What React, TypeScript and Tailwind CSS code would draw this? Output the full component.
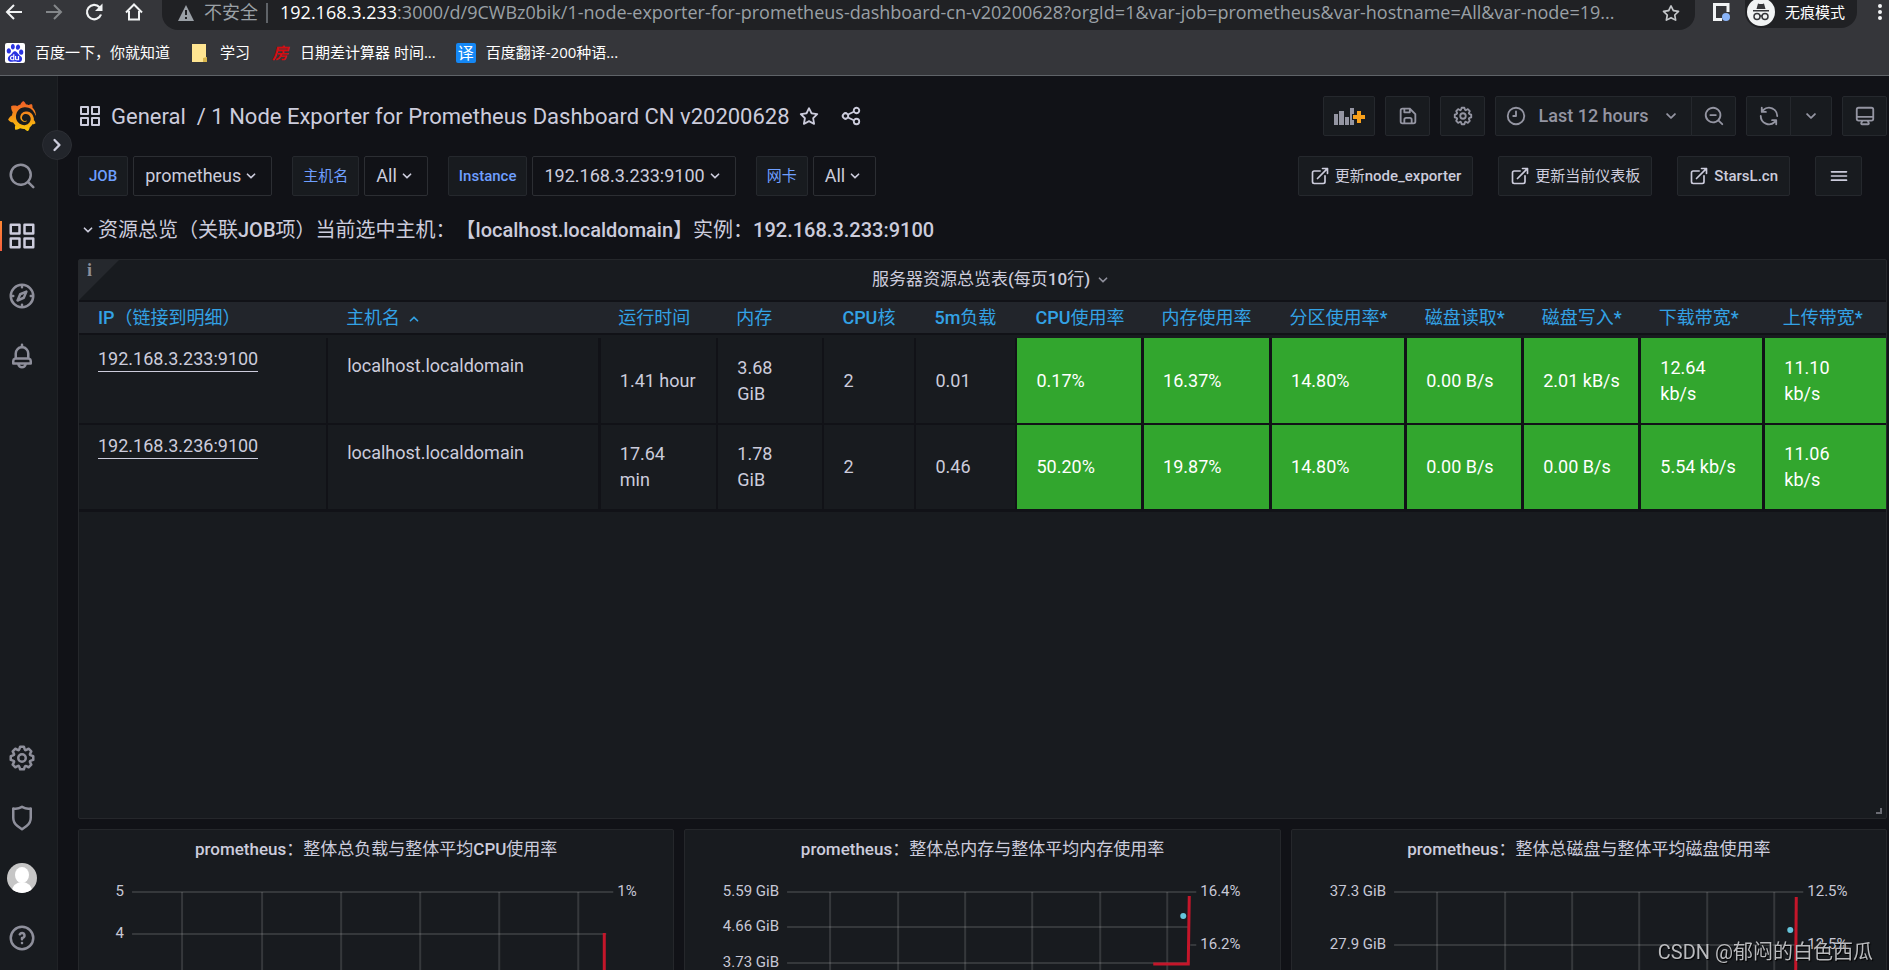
import type { ReactNode } from "react";
import { SiBaidu, SiGrafana } from "react-icons/si";

const icons = {
  apps: "M10,13H3a1,1,0,0,0-1,1v7a1,1,0,0,0,1,1h7a1,1,0,0,0,1-1V14A1,1,0,0,0,10,13ZM9,20H4V15H9ZM21,2H14a1,1,0,0,0-1,1v7a1,1,0,0,0,1,1h7a1,1,0,0,0,1-1V3A1,1,0,0,0,21,2ZM20,9H15V4h5Zm1,4H14a1,1,0,0,0-1,1v7a1,1,0,0,0,1,1h7a1,1,0,0,0,1-1V14A1,1,0,0,0,21,13Zm-1,7H15V15h5ZM10,2H3A1,1,0,0,0,2,3v7a1,1,0,0,0,1,1h7a1,1,0,0,0,1-1V3A1,1,0,0,0,10,2ZM9,9H4V4H9Z",
  search: "M21.71,20.29,18,16.61A9,9,0,1,0,16.61,18l3.68,3.68a1,1,0,0,0,1.42,0A1,1,0,0,0,21.71,20.29ZM11,18a7,7,0,1,1,7-7A7,7,0,0,1,11,18Z",
  searchMinus:
    "M21.71,20.29,18,16.61A9,9,0,1,0,16.61,18l3.68,3.68a1,1,0,0,0,1.42,0A1,1,0,0,0,21.71,20.29ZM11,18a7,7,0,1,1,7-7A7,7,0,0,1,11,18ZM14,10H8a1,1,0,0,0,0,2h6a1,1,0,0,0,0-2Z",
  angleDown:
    "M17,9.17a1,1,0,0,0-1.41,0L12,12.71,8.46,9.17a1,1,0,0,0-1.41,0,1,1,0,0,0,0,1.42l4.24,4.24a1,1,0,0,0,1.42,0L17,10.59A1,1,0,0,0,17,9.17Z",
  compass:
    "M12,2A10,10,0,1,0,22,12,10,10,0,0,0,12,2Zm1,17.93V19a1,1,0,0,0-2,0v.93A8,8,0,0,1,4.07,13H5a1,1,0,0,0,0-2H4.07A8,8,0,0,1,11,4.07V5a1,1,0,0,0,2,0V4.07A8,8,0,0,1,19.93,11H19a1,1,0,0,0,0,2h.93A8,8,0,0,1,13,19.93ZM15.14,7.55l-5,2.12a1,1,0,0,0-.52.52l-2.12,5a1,1,0,0,0,.21,1.1,1,1,0,0,0,.7.3.93.93,0,0,0,.4-.09l5-2.12a1,1,0,0,0,.52-.52l2.12-5a1,1,0,0,0-1.31-1.31Zm-2.49,5.1-2.28,1,1-2.28,2.28-1Z",
  bell: "M18,13.18V10a6,6,0,0,0-5-5.91V3a1,1,0,0,0-2,0V4.09A6,6,0,0,0,6,10v3.18A3,3,0,0,0,4,16v2a1,1,0,0,0,1,1H8.14a4,4,0,0,0,7.72,0H19a1,1,0,0,0,1-1V16A3,3,0,0,0,18,13.18ZM8,10a4,4,0,0,1,8,0v3H8Zm4,10a2,2,0,0,1-1.72-1h3.44A2,2,0,0,1,12,20Zm6-3H6V16a1,1,0,0,1,1-1H17a1,1,0,0,1,1,1Z",
  cog: "M21.32,9.55l-1.89-.63.89-1.78A1,1,0,0,0,20.13,6L18,3.87a1,1,0,0,0-1.15-.19l-1.78.89-.63-1.89A1,1,0,0,0,13.5,2h-3a1,1,0,0,0-.95.68L8.92,4.57,7.14,3.68A1,1,0,0,0,6,3.87L3.87,6a1,1,0,0,0-.19,1.15l.89,1.78-1.89.63A1,1,0,0,0,2,10.5v3a1,1,0,0,0,.68.95l1.89.63-.89,1.78A1,1,0,0,0,3.87,18L6,20.13a1,1,0,0,0,1.15.19l1.78-.89.63,1.89a1,1,0,0,0,.95.68h3a1,1,0,0,0,.95-.68l.63-1.89,1.78.89A1,1,0,0,0,18,20.13L20.13,18a1,1,0,0,0,.19-1.15l-.89-1.78,1.89-.63A1,1,0,0,0,22,13.5v-3A1,1,0,0,0,21.32,9.55ZM20,12.78l-1.2.4A2,2,0,0,0,17.64,16l.57,1.14-1.1,1.1L16,17.64a2,2,0,0,0-2.79,1.16l-.4,1.2H11.22l-.4-1.2A2,2,0,0,0,8,17.64l-1.14.57-1.1-1.1L6.36,16A2,2,0,0,0,5.2,13.18L4,12.78V11.22l1.2-.4A2,2,0,0,0,6.36,8L5.79,6.89l1.1-1.1L8,6.36A2,2,0,0,0,10.82,5.2l.4-1.2h1.56l.4,1.2A2,2,0,0,0,16,6.36l1.14-.57,1.1,1.1L17.64,8a2,2,0,0,0,1.16,2.79l1.2.4ZM12,8a4,4,0,1,0,4,4A4,4,0,0,0,12,8Zm0,6a2,2,0,1,1,2-2A2,2,0,0,1,12,14Z",
  shield:
    "M19.63,3.65a1,1,0,0,0-.84-.2,8,8,0,0,1-6.22-1.27,1,1,0,0,0-1.14,0A8,8,0,0,1,5.21,3.45a1,1,0,0,0-.84.2A1,1,0,0,0,4,4.43v7.45a9,9,0,0,0,3.77,7.33l3.65,2.6a1,1,0,0,0,1.16,0l3.65-2.6A9,9,0,0,0,20,11.88V4.43A1,1,0,0,0,19.63,3.65ZM18,11.88a7,7,0,0,1-2.93,5.7L12,19.77,8.93,17.58A7,7,0,0,1,6,11.88V5.58a10,10,0,0,0,6-1.39,10,10,0,0,0,6,1.39Z",
  question:
    "M11.29,15.29a1.58,1.58,0,0,0-.12.15.76.76,0,0,0-.09.18.64.64,0,0,0-.06.18,1.36,1.36,0,0,0,0,.2.84.84,0,0,0,.08.38.9.9,0,0,0,.54.54.94.94,0,0,0,.76,0,.9.9,0,0,0,.54-.54A1,1,0,0,0,13,16a1,1,0,0,0-.29-.71A1,1,0,0,0,11.29,15.29ZM12,2A10,10,0,1,0,22,12,10,10,0,0,0,12,2Zm0,18a8,8,0,1,1,8-8A8,8,0,0,1,12,20ZM12,7A3,3,0,0,0,9.4,8.5a1,1,0,1,0,1.73,1A1,1,0,0,1,12,9a1,1,0,0,1,0,2,1,1,0,0,0-1,1v1a1,1,0,0,0,2,0v-.18A3,3,0,0,0,12,7Z",
  save: "M20.71,9.29l-6-6a1,1,0,0,0-.32-.21A1.09,1.09,0,0,0,14,3H6A3,3,0,0,0,3,6V18a3,3,0,0,0,3,3H18a3,3,0,0,0,3-3V10A1,1,0,0,0,20.71,9.29ZM9,5h4V7H9Zm6,14H9V16a1,1,0,0,1,1-1h4a1,1,0,0,1,1,1Zm4-1a1,1,0,0,1-1,1H17V16a3,3,0,0,0-3-3H10a3,3,0,0,0-3,3v3H6a1,1,0,0,1-1-1V6A1,1,0,0,1,6,5H7V8A1,1,0,0,0,8,9h6a1,1,0,0,0,1-1V6.41l4,4Z",
  clock:
    "M12,2A10,10,0,1,0,22,12,10,10,0,0,0,12,2Zm0,18a8,8,0,1,1,8-8A8,8,0,0,1,12,20ZM12,6a1,1,0,0,0-1,1v4H9a1,1,0,0,0,0,2h3a1,1,0,0,0,1-1V7A1,1,0,0,0,12,6Z",
  sync: "M19.91,15.51H15.38a1,1,0,0,0,0,2h2.4A8,8,0,0,1,4,12a1,1,0,0,0-2,0,10,10,0,0,0,16.88,7.23V21a1,1,0,0,0,2,0V16.5A1,1,0,0,0,19.91,15.51ZM12,2A10,10,0,0,0,5.12,4.77V3a1,1,0,0,0-2,0V7.5a1,1,0,0,0,1,1h4.5a1,1,0,0,0,0-2H6.22A8,8,0,0,1,20,12a1,1,0,0,0,2,0A10,10,0,0,0,12,2Z",
  monitor:
    "M19,2H5A3,3,0,0,0,2,5V15a3,3,0,0,0,3,3H7.64l-.58,1a2,2,0,0,0,0,2,2,2,0,0,0,1.75,1h6.46A2,2,0,0,0,17,21a2,2,0,0,0,0-2l-.59-1H19a3,3,0,0,0,3-3V5A3,3,0,0,0,19,2ZM8.77,20,10,18H14l1.2,2ZM20,15a1,1,0,0,1-1,1H5a1,1,0,0,1-1-1V14H20Zm0-3H4V5A1,1,0,0,1,5,4H19a1,1,0,0,1,1,1Z",
  external:
    "M18,10.82a1,1,0,0,0-1,1V19a1,1,0,0,1-1,1H5a1,1,0,0,1-1-1V8A1,1,0,0,1,5,7h7.18a1,1,0,0,0,0-2H5A3,3,0,0,0,2,8V19a3,3,0,0,0,3,3H16a3,3,0,0,0,3-3V11.82A1,1,0,0,0,18,10.82Zm3.92-8.2a1,1,0,0,0-.54-.54A1,1,0,0,0,21,2H15a1,1,0,0,0,0,2h3.59L8.29,14.29a1,1,0,0,0,0,1.42,1,1,0,0,0,1.42,0L20,5.41V9a1,1,0,0,0,2,0V3A1,1,0,0,0,21.92,2.62Z",
  star: "M22,9.67A1,1,0,0,0,21.14,9l-5.69-.83L12.9,3a1,1,0,0,0-1.8,0L8.55,8.16,2.86,9a1,1,0,0,0-.81.68,1,1,0,0,0,.25,1l4.13,4-1,5.68A1,1,0,0,0,6.9,21.44L12,18.77l5.1,2.67a.93.93,0,0,0,.46.12,1,1,0,0,0,.59-.19,1,1,0,0,0,.4-1l-1-5.68,4.13-4A1,1,0,0,0,22,9.67Zm-6.15,4a1,1,0,0,0-.29.88l.72,4.2-3.76-2a1.06,1.06,0,0,0-.94,0l-3.76,2,.72-4.2a1,1,0,0,0-.29-.88l-3-3,4.21-.61a1,1,0,0,0,.76-.55L12,5.7l1.88,3.82a1,1,0,0,0,.76.55l4.21.61Z",
  share:
    "M18,14a4,4,0,0,0-3.08,1.48l-5.1-2.35a3.64,3.64,0,0,0,0-2.26l5.1-2.35A4,4,0,1,0,14,6a4.17,4.17,0,0,0,.07.71L8.79,9.14a4,4,0,1,0,0,5.72l5.28,2.43A4.17,4.17,0,0,0,14,18a4,4,0,1,0,4-4ZM18,4a2,2,0,1,1-2,2A2,2,0,0,1,18,4ZM6,14a2,2,0,1,1,2-2A2,2,0,0,1,6,14Zm12,6a2,2,0,1,1,2-2A2,2,0,0,1,18,20Z",
  bars: "M3,8H21a1,1,0,0,0,0-2H3A1,1,0,0,0,3,8Zm18,8H3a1,1,0,0,0,0,2H21a1,1,0,0,0,0-2Zm0-5H3a1,1,0,0,0,0,2H21a1,1,0,0,0,0-2Z",
};

type IconName = keyof typeof icons;

function Icon({ name, className = "size-5" }: { name: IconName; className?: string }) {
  return (
    <svg viewBox="0 0 24 24" fill="currentColor" aria-hidden="true" className={`shrink-0 ${className}`}>
      <path d={icons[name]} />
    </svg>
  );
}

// Chinese runs stay at regular weight inside medium-weight labels
function Mixed({ text }: { text: string }) {
  return (
    <span>
      {text.split(/([\u3000-\u9fff\uff00-\uffef]+)/).map((part, i) =>
        i % 2 ? (
          <span key={i} className="font-normal">
            {part}
          </span>
        ) : (
          part
        ),
      )}
    </span>
  );
}

const bookmarks = [
  {
    label: "百度一下，你就知道",
    icon: (
      <span className="flex size-5 items-center justify-center rounded-xs bg-white">
        <SiBaidu className="size-[18px] text-[#2932e1]" />
      </span>
    ),
  },
  {
    label: "学习",
    icon: (
      <svg viewBox="0 0 20 20" className="size-5">
        <path d="M2 1h14v13l1 1v4H2z" fill="#ffe591" />
        <path d="M13 19v-4l4-1v5z" fill="#d9b64c" />
      </svg>
    ),
  },
  {
    label: "日期差计算器 时间...",
    icon: (
      <span className="flex size-5 items-center justify-center text-base font-bold text-[#d40d12] italic">房</span>
    ),
  },
  {
    label: "百度翻译-200种语...",
    icon: (
      <span className="flex size-5 items-center justify-center rounded-xs bg-[#1487f4] text-base text-white">译</span>
    ),
  },
];

function BrowserBar() {
  return (
    <div className="h-[76px] shrink-0 border-b border-[#5f6368] bg-[#35363a] font-['Open_Sans','Noto_Sans_CJK_SC',sans-serif]">
      <div className="flex h-[30px] items-start">
        <div className="flex h-6 w-[162px] shrink-0 items-center gap-5 pl-1 text-[#f1f3f4]">
          <button aria-label="Back" className="size-5">
            <svg viewBox="0 0 20 20" fill="none" stroke="currentColor" strokeWidth="2">
              <path d="M18 10H3M10 3l-7 7 7 7" />
            </svg>
          </button>
          <button aria-label="Forward" className="size-5 text-[#84878a]">
            <svg viewBox="0 0 20 20" fill="none" stroke="currentColor" strokeWidth="2">
              <path d="M2 10h15M10 3l7 7-7 7" />
            </svg>
          </button>
          <button aria-label="Reload" className="size-5">
            <svg viewBox="0 0 20 20" fill="none" stroke="currentColor" strokeWidth="2.2">
              <path d="M17 12.500A7.200 7.200 0 1 1 15.500 5.200" />
              <path d="M18.500 1.500v7.500h-7.500z" fill="currentColor" stroke="none" />
            </svg>
          </button>
          <button aria-label="Home" className="size-5">
            <svg viewBox="0 0 20 20" fill="none" stroke="currentColor" strokeWidth="2">
              <path d="M2 10.500 10 2.500l8 8M5 9v8.500h10V9" />
            </svg>
          </button>
        </div>
        <div className="flex h-[30px] min-w-0 flex-1 items-start rounded-b-2xl bg-[#202124] pr-[14px] pl-[14px] text-lg/6 text-[#9aa0a6]">
          <svg viewBox="0 0 20 20" className="mt-[3px] size-5 shrink-0">
            <path d="M10 2 18 18H2z" fill="#9aa0a6" />
            <path d="M9 7h2v5H9zM9 14h2v2H9z" fill="#202124" />
          </svg>
          <span className="ml-2 shrink-0">不安全</span>
          <span className="mt-[3px] ml-2 h-5 w-0.5 shrink-0 bg-[#5f6368]" />
          <span className="ml-3 min-w-0 flex-1 truncate">
            <span className="text-white">192.168.3.233</span>
            :3000/d/9CWBz0bik/1-node-exporter-for-prometheus-dashboard-cn-v20200628?orgId=1&var-job=prometheus&var-hostname=All&var-node=19...
          </span>
          <button aria-label="Bookmark" className="mt-[3px] ml-4 text-[#c4c7ca]">
            <Icon name="star" />
          </button>
        </div>
        <div className="ml-4 flex h-6 shrink-0 items-center">
          <svg viewBox="0 0 20 20" className="size-5">
            <path d="M3.500 2.500h13.500v15H3.500z" fill="none" stroke="#f1f3f4" strokeWidth="3" />
            <path d="M11 10h8v10h-8z" fill="#35363a" />
            <circle cx="15" cy="15" r="4" fill="#8ab4f8" />
          </svg>
        </div>
        <button className="ml-[14px] flex h-7 shrink-0 items-start rounded-b-2xl bg-[#202124] pr-3 text-[15px]/6 text-white">
          <svg viewBox="0 0 32 28" className="h-7 w-8">
            <circle cx="16" cy="12" r="14" fill="#f1f3f4" />
            <path d="M11.500 9 13 3.500q3 1 6 0L20.500 9zM8 10h16v1.500H8z" fill="#35363a" />
            <g fill="none" stroke="#35363a" strokeWidth="1.500">
              <circle cx="12" cy="16.500" r="3" />
              <circle cx="20" cy="16.500" r="3" />
              <path d="M15 16h2" />
            </g>
          </svg>
          <span className="ml-2">无痕模式</span>
        </button>
        <button aria-label="Menu" className="ml-3 h-6 w-5 shrink-0">
          <svg viewBox="0 0 20 24" fill="#f1f3f4">
            <circle cx="11" cy="6" r="2" />
            <circle cx="11" cy="12" r="2" />
            <circle cx="11" cy="18" r="2" />
          </svg>
        </button>
      </div>
      <div className="flex h-[45px] items-center gap-5 pl-[5px] text-[15px] text-white">
        {bookmarks.map((b) => (
          <a key={b.label} href="#" className="flex items-center gap-[10px]">
            {b.icon}
            {b.label}
          </a>
        ))}
      </div>
    </div>
  );
}

function SideItem({ name, label, active }: { name: IconName; label: string; active?: boolean }) {
  return (
    <a
      href="#"
      aria-label={label}
      className={`relative flex h-[60px] w-11 items-center justify-center ${active ? "text-[#ccccdc]" : "text-[#8e8f9b]"}`}
    >
      {active && <span className="absolute top-[15px] left-0 h-[30px] w-0.5 bg-linear-to-b from-[#ff8833] to-[#f55f3e]" />}
      <Icon name={name} className="size-[30px]" />
    </a>
  );
}

function Sidebar() {
  return (
    <nav className="relative flex w-[58px] shrink-0 flex-col border-r border-[#202226] bg-[#181b1f] pt-[10px] pb-0.5">
      <a href="#" aria-label="Grafana" className="flex h-[60px] w-11 items-center justify-center">
        <svg className="absolute size-0">
          <linearGradient id="grafana" x1="0" y1="0" x2="0" y2="1">
            <stop offset="0" stopColor="#f05a28" />
            <stop offset="1" stopColor="#fbca0a" />
          </linearGradient>
        </svg>
        <SiGrafana fill="url(#grafana)" className="size-[30px]" />
      </a>
      <SideItem name="search" label="Search" />
      <SideItem name="apps" label="Dashboards" active />
      <SideItem name="compass" label="Explore" />
      <SideItem name="bell" label="Alerting" />
      <div className="mt-auto" />
      <SideItem name="cog" label="Configuration" />
      <SideItem name="shield" label="Server admin" />
      <a href="#" aria-label="Profile" className="flex h-[60px] w-11 items-center justify-center">
        <svg viewBox="0 0 30 30" className="size-[30px] rounded-full bg-[#c6c6c6]" fill="#fff">
          <ellipse cx="15" cy="12" rx="7" ry="8" />
          <path d="M4 30q2-11 11-11t11 11z" />
        </svg>
      </a>
      <SideItem name="question" label="Help" />
      <button
        aria-label="Expand menu"
        className="absolute top-[54px] -right-[15px] z-10 flex size-[30px] items-center justify-center rounded-full border border-[#2c2e34] bg-[#22252b]"
      >
        <Icon name="angleDown" className="size-7 -rotate-90" />
      </button>
    </nav>
  );
}

const toolButton = "flex h-10 items-center justify-center border border-[#25282d] bg-[#181b1f] text-[#9495a2]";

function Toolbar() {
  return (
    <header className="flex h-20 items-center">
      <Icon name="apps" className="size-6" />
      <h1 className="ml-[9px] flex gap-[11px] text-[22px] whitespace-nowrap">
        <a href="#">General</a>
        <a href="#">/ 1 Node Exporter for Prometheus Dashboard CN v20200628</a>
      </h1>
      <button aria-label="Mark as favorite" className="ml-2">
        <Icon name="star" className="size-[22px]" />
      </button>
      <button aria-label="Share dashboard" className="ml-5">
        <Icon name="share" className="size-[22px]" />
      </button>
      <div className="ml-auto flex gap-[10px]">
        <button aria-label="Add panel" className={`${toolButton} w-[52px] rounded-xs`}>
          <svg viewBox="0 0 32 20" className="h-5 w-8" fill="currentColor">
            <path d="M1 8h4v11H1zM6 5h5v14H6zM12 11h4v8h-4zM17 2h4v6h-2v6h2v5h-4z" />
            <path d="M24 5h4v4h4v4h-4v4h-4v-4h-4V9h4z" fill="#f9a11b" />
          </svg>
        </button>
        <button aria-label="Save dashboard" className={`${toolButton} w-[45px] rounded-xs`}>
          <Icon name="save" className="size-[22px]" />
        </button>
        <button aria-label="Dashboard settings" className={`${toolButton} w-[45px] rounded-xs`}>
          <Icon name="cog" className="size-[22px]" />
        </button>
        <div className="flex">
          <button className={`${toolButton} w-[197px] gap-3 rounded-l-xs text-lg font-medium`}>
            <Icon name="clock" className="size-[22px]" />
            Last 12 hours
            <Icon name="angleDown" className="size-[22px]" />
          </button>
          <button aria-label="Zoom out" className={`${toolButton} -ml-px w-[45px] rounded-r-xs`}>
            <Icon name="searchMinus" className="size-[22px]" />
          </button>
        </div>
        <div className="flex">
          <button aria-label="Refresh" className={`${toolButton} w-[45px] rounded-l-xs`}>
            <Icon name="sync" className="size-[22px]" />
          </button>
          <button aria-label="Refresh interval" className={`${toolButton} -ml-px w-[42px] rounded-r-xs`}>
            <Icon name="angleDown" className="size-[22px]" />
          </button>
        </div>
        <button aria-label="Cycle view mode" className={`${toolButton} w-[45px] rounded-xs`}>
          <Icon name="monitor" className="size-[22px]" />
        </button>
      </div>
    </header>
  );
}

const variables = [
  { label: "JOB", value: "prometheus" },
  { label: "主机名", value: "All" },
  { label: "Instance", value: "192.168.3.233:9100" },
  { label: "网卡", value: "All" },
];

function Submenu() {
  return (
    <div className="flex h-10 items-stretch">
      <div className="flex gap-5">
        {variables.map((v) => (
          <div key={v.label} className="flex gap-[5px]">
            <span className="flex items-center rounded-xs border border-[#25282d] bg-[#181b1f] px-[10px] text-[15px] font-medium text-[#6e9fff]">
              <Mixed text={v.label} />
            </span>
            <button
              aria-label={v.label}
              className="flex items-center rounded-xs border border-[#2c2e33] pr-[10px] pl-[11px] text-lg"
            >
              {v.value}
              <Icon name="angleDown" />
            </button>
          </div>
        ))}
      </div>
      <div className="mr-[25px] ml-auto flex gap-[25px] text-[15px] font-medium">
        {["更新node_exporter", "更新当前仪表板", "StarsL.cn"].map((text) => (
          <a
            key={text}
            href="#"
            className="flex items-center gap-[5px] rounded-xs border border-[#25282d] bg-[#181b1f] px-[11px]"
          >
            <Icon name="external" />
            <Mixed text={text} />
          </a>
        ))}
        <button
          aria-label="More links"
          className="flex w-[47px] items-center justify-center rounded-xs border border-[#25282d] bg-[#181b1f]"
        >
          <Icon name="bars" />
        </button>
      </div>
    </div>
  );
}

const columns = [
  { title: "IP（链接到明细）", width: "w-[248px]" },
  { title: "主机名", width: "w-[272px]" },
  { title: "运行时间", width: "w-[118px]" },
  { title: "内存", width: "w-[106px]" },
  { title: "CPU核", width: "w-[92px]" },
  { title: "5m负载", width: "w-[101px]" },
  { title: "CPU使用率", width: "w-[126px]" },
  { title: "内存使用率", width: "w-[128px]" },
  { title: "分区使用率*", width: "w-[135px]" },
  { title: "磁盘读取*", width: "w-[117px]" },
  { title: "磁盘写入*", width: "w-[117px]" },
  { title: "下载带宽*", width: "w-[124px]" },
  { title: "上传带宽*", width: "w-[122px]" },
];

const rows = [
  {
    ip: "192.168.3.233:9100",
    host: "localhost.localdomain",
    stats: ["1.41 hour", "3.68 GiB", "2", "0.01"],
    usage: ["0.17%", "16.37%", "14.80%", "0.00 B/s", "2.01 kB/s", "12.64 kb/s", "11.10 kb/s"],
  },
  {
    ip: "192.168.3.236:9100",
    host: "localhost.localdomain",
    stats: ["17.64 min", "1.78 GiB", "2", "0.46"],
    usage: ["50.20%", "19.87%", "14.80%", "0.00 B/s", "0.00 B/s", "5.54 kb/s", "11.06 kb/s"],
  },
];

function Panel({ children, className = "" }: { children: ReactNode; className?: string }) {
  return <section className={`rounded-xs border border-[#25272b] bg-[#181b1f] ${className}`}>{children}</section>;
}

function OverviewPanel() {
  return (
    <Panel className="relative h-[560px]">
      <div className="absolute top-0 left-0 h-10 w-10 bg-[#25282d] [clip-path:polygon(0_0,100%_0,0_100%)]" />
      <span className="absolute top-0 left-2 font-['Liberation_Serif',serif] text-lg/5 font-bold text-[#8e8f9b]">i</span>
      <h2 className="flex h-10 items-center justify-center gap-[3px] pl-5 text-[17px] font-medium">
        <Mixed text="服务器资源总览表(每页10行)" />
        <Icon name="angleDown" className="size-5 text-[#8e8f9b]" />
      </h2>
      <table className="w-full table-fixed border-collapse text-left text-lg/[26px]">
        <thead>
          <tr className="h-[33px] border-y-2 border-[#111217] bg-[#22252b] text-[#33a2e5]">
            {columns.map((c) => (
              <th key={c.title} className={`${c.width} pl-[19px] font-medium whitespace-nowrap`}>
                <Mixed text={c.title} />
                {c.title === "主机名" && <Icon name="angleDown" className="ml-1 inline size-5 rotate-180" />}
              </th>
            ))}
          </tr>
        </thead>
        <tbody>
          <tr className="h-1">
            <td colSpan={13} />
          </tr>
          {rows.map((row) => (
            <tr key={row.ip} className="h-[86px] border-b-2 border-[#111217] last:border-b-3">
              <td className="border-r-2 border-[#111217] pt-2 pl-[19px] align-top">
                <a href="#" className="inline-block border-b border-[#ccccdc] leading-[25px]">
                  {row.ip}
                </a>
              </td>
              <td className="border-r-3 border-[#111217] pt-[15px] pl-[19px] align-top">{row.host}</td>
              {row.stats.map((s, i) => (
                <td key={i} className="border-r-2 border-[#111217] px-[19px]">
                  {s}
                </td>
              ))}
              {row.usage.map((s, i) => (
                <td key={i} className="border-r-3 border-[#111217] bg-[#32a62e] pl-[19px] text-white last:border-r-0">
                  <span className="block max-w-[84px]">{s}</span>
                </td>
              ))}
            </tr>
          ))}
        </tbody>
      </table>
      <span className="absolute right-1 bottom-1 size-[6px] border-r-2 border-b-2 border-[#6b6c74]" />
    </Panel>
  );
}

type Chart = {
  title: string;
  left: number;
  right: number;
  xTicks: number[];
  yTicks: { y: number; label: string }[];
  rightTicks: { y: number; label: string }[];
  series: string;
  dot?: { x: number; y: number };
};

// coordinates are in a 594 unit wide plot, y starts below the title
const charts: Chart[] = [
  {
    title: "prometheus：整体总负载与整体平均CPU使用率",
    left: 53,
    right: 534,
    xTicks: [103, 183, 262, 341, 420, 499],
    yTicks: [
      { y: 22, label: "5" },
      { y: 64, label: "4" },
    ],
    rightTicks: [{ y: 22, label: "1%" }],
    series: "M525 63V160",
  },
  {
    title: "prometheus：整体总内存与整体平均内存使用率",
    left: 102,
    right: 511,
    xTicks: [145, 213, 280, 347, 415, 482],
    yTicks: [
      { y: 22, label: "5.59 GiB" },
      { y: 57, label: "4.66 GiB" },
      { y: 93, label: "3.73 GiB" },
    ],
    rightTicks: [
      { y: 22, label: "16.4%" },
      { y: 75, label: "16.2%" },
    ],
    series: "M468 94H503L504 26",
    dot: { x: 498, y: 46 },
  },
  {
    title: "prometheus：整体总磁盘与整体平均磁盘使用率",
    left: 102,
    right: 511,
    xTicks: [145, 213, 280, 347, 415, 482],
    yTicks: [
      { y: 22, label: "37.3 GiB" },
      { y: 75, label: "27.9 GiB" },
    ],
    rightTicks: [
      { y: 22, label: "12.5%" },
      { y: 75, label: "12.5%" },
    ],
    series: "M503 160L504 27",
    dot: { x: 498, y: 60 },
  },
];

function ChartPanel({ chart }: { chart: Chart }) {
  const { left, right } = chart;
  return (
    <Panel className="overflow-hidden">
      <h2 className="flex h-10 items-center justify-center text-[17px] font-medium">
        <Mixed text={chart.title} />
      </h2>
      <svg viewBox="0 0 594 160" className="w-full text-[15px]">
        <g stroke="#c8c8c8" strokeOpacity="0.17" strokeWidth="2">
          {chart.yTicks.map((t, i) => (
            <path key={t.y} d={`M${left} ${t.y}H${i === 0 ? right : right - 7}`} />
          ))}
          {chart.xTicks.map((x) => (
            <path key={x} d={`M${x} 22V160`} />
          ))}
          {chart.rightTicks.slice(1).map((t) => (
            <path key={t.y} d={`M${right - 6} ${t.y}h6`} />
          ))}
        </g>
        <g fill="#c7c8d6">
          {chart.yTicks.map((t) => (
            <text key={t.y} x={left - 8} y={t.y + 4} textAnchor="end">
              {t.label}
            </text>
          ))}
          {chart.rightTicks.map((t) => (
            <text key={t.y} x={right + 4} y={t.y + 4}>
              {t.label}
            </text>
          ))}
        </g>
        <path d={chart.series} fill="none" stroke="#c4162a" strokeWidth="3" />
        {chart.dot && <circle cx={chart.dot.x} cy={chart.dot.y} r="3" fill="#65c5db" />}
      </svg>
    </Panel>
  );
}

export default function App() {
  return (
    <div className="flex h-screen flex-col overflow-hidden bg-[#111217] font-[Roboto,'Noto_Sans_CJK_SC',sans-serif] text-[#ccccdc] [text-spacing-trim:space-all]">
      <BrowserBar />
      <div className="flex min-h-0 flex-1">
        <Sidebar />
        <main className="min-w-0 flex-1 overflow-hidden pr-0.5 pl-5">
          <Toolbar />
          <Submenu />
          <button className="flex h-[63px] items-center pt-1 text-xl font-medium">
            <Icon name="angleDown" />
            <Mixed text="资源总览（关联JOB项）当前选中主机：【localhost.localdomain】实例：192.168.3.233:9100" />
          </button>
          <OverviewPanel />
          <div className="mt-[10px] grid grid-cols-3 gap-[10px]">
            {charts.map((chart) => (
              <ChartPanel key={chart.title} chart={chart} />
            ))}
          </div>
        </main>
      </div>
      <p className="fixed right-4 bottom-1 text-xl text-[#b9babd] [text-shadow:1px_1px_1px_#000]">CSDN @郁闷的白色西瓜</p>
    </div>
  );
}
